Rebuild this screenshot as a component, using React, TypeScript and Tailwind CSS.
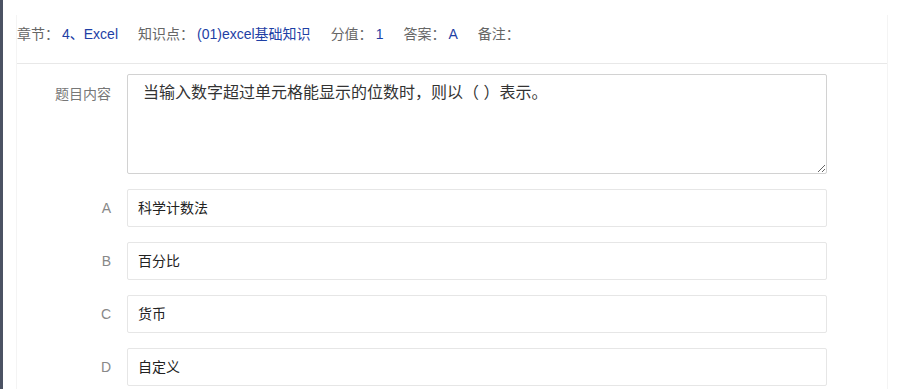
import React from "react";

const meta = [
    { label: "章节：", value: "4、Excel" },
    { label: "知识点：", value: "(01)excel基础知识" },
    { label: "分值：", value: "1" },
    { label: "答案：", value: "A" },
    { label: "备注：", value: "" },
];

const options = [
    { key: "A", text: "科学计数法" },
    { key: "B", text: "百分比" },
    { key: "C", text: "货币" },
    { key: "D", text: "自定义" },
];

export default function App() {
    return (
        <div
            className="flex h-[389px] w-[901px] overflow-hidden bg-white"
            style={{ fontFamily: '"Liberation Sans", "Noto Sans CJK SC", sans-serif' }}
        >
            <div className="w-[3px] shrink-0 bg-[#4b5263]" />

            <div className="ml-[13px] mt-[15px] w-[872px] shrink-0 border-x border-[#f4f4f4]">
                {/* Meta row */}
                <div className="flex items-center gap-[20px] border-b border-[#e8e8e8] pb-[19px] pt-[9px] text-[14px] leading-[20px]">
                    {meta.map((m) => (
                        <div key={m.label} className="flex items-center">
                            <span className="text-[#666]">{m.label}</span>
                            {m.value && <span className="ml-[3px] text-[#1e3fa5]">{m.value}</span>}
                        </div>
                    ))}
                </div>

                {/* Question form */}
                <div className="mt-[10px] flex flex-col gap-[15px]">
                    <div className="flex gap-[16px]">
                        <div className="w-[94px] shrink-0 pt-[10px] text-right text-[14px] leading-[20px] text-[#777]">
                            题目内容
                        </div>
                        <textarea
                            readOnly
                            defaultValue="当输入数字超过单元格能显示的位数时，则以（ ）表示。"
                            className="h-[100px] w-[700px] resize-y rounded-[2px] border border-[#d2d2d2] px-[15px] pt-[7px] text-[16px] leading-[22px] text-[#333] outline-none"
                        />
                    </div>

                    {options.map((o) => (
                        <div key={o.key} className="flex items-center gap-[16px]">
                            <div className="w-[94px] shrink-0 text-right text-[14px] text-[#888]">{o.key}</div>
                            <div className="flex h-[38px] w-[700px] items-center rounded-[2px] border border-[#e6e6e6] px-[10px] text-[14px] text-[#222]">
                                {o.text}
                            </div>
                        </div>
                    ))}
                </div>
            </div>
        </div>
    );
}
